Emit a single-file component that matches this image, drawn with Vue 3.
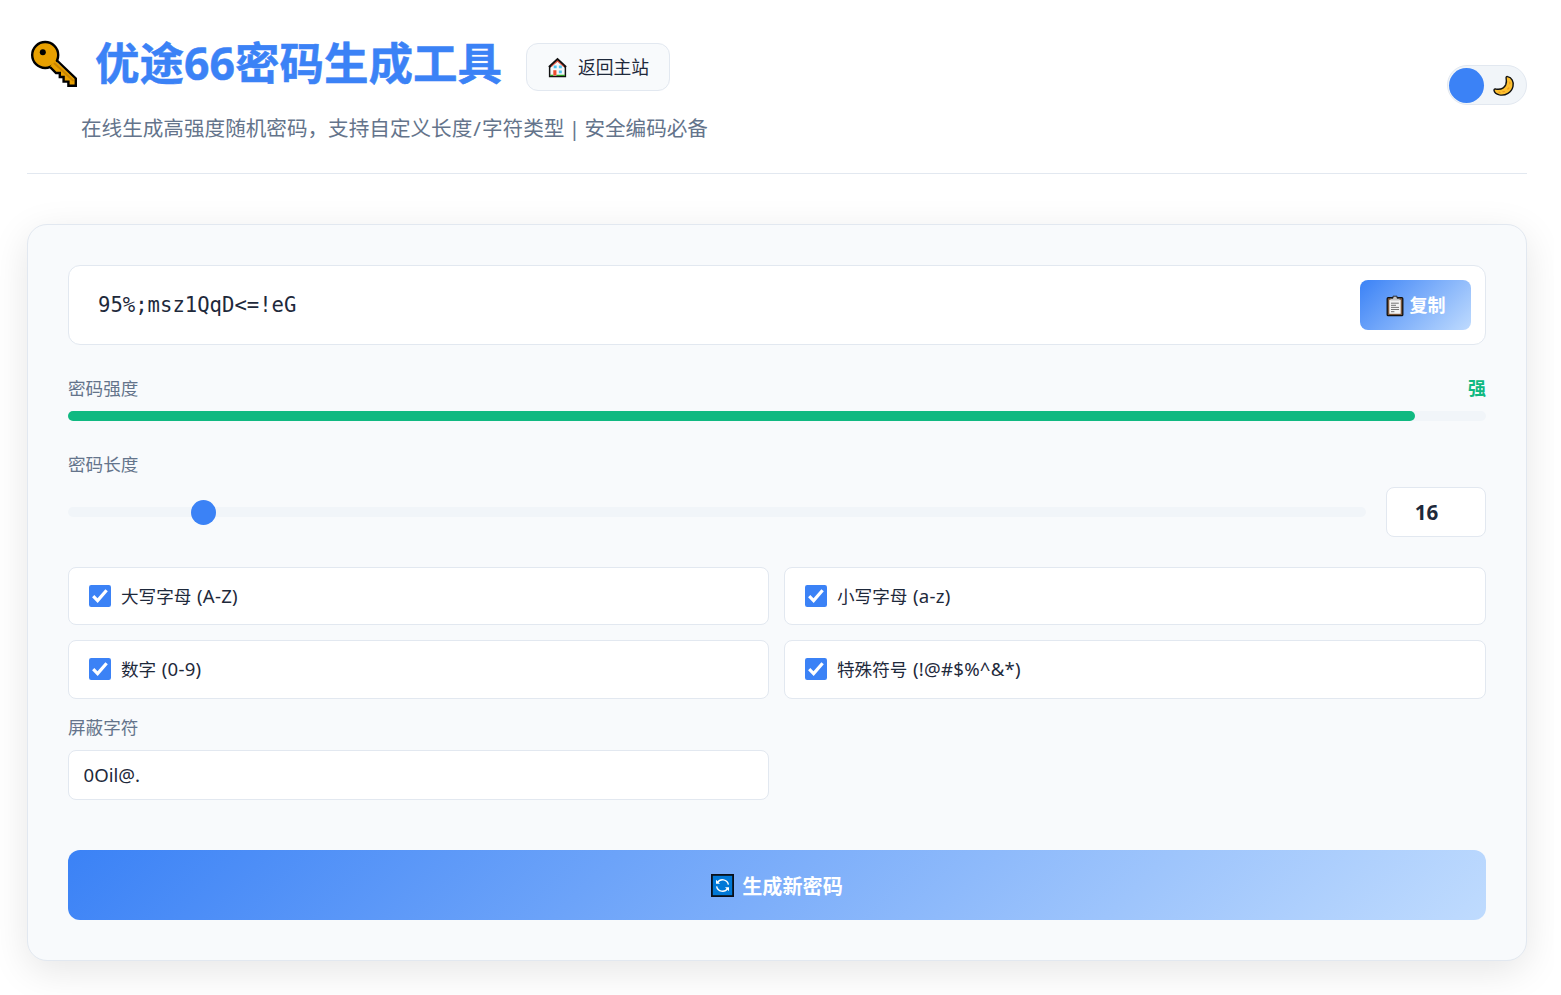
<script setup>
import { ref } from 'vue'

const password = ref('95%;msz1QqD<=!eG')
const length = ref('16')
const excluded = ref('0Oil@.')
const strength = 95
const thumb = 9.47
const options = ref([
  { label: '大写字母', chars: '(A-Z)', on: true },
  { label: '小写字母', chars: '(a-z)', on: true },
  { label: '数字', chars: '(0-9)', on: true },
  { label: '特殊符号', chars: '(!@#$%^&*)', on: true },
])
</script>

<template>
  <div class="page">
    <header class="header">
      <div class="brand">
        <div class="title-row">
          <svg class="key" viewBox="0 0 48 48">
            <circle cx="15.2" cy="15" r="13" fill="#e8a000" stroke="#000" stroke-width="2.4" />
            <path d="M25 20.5 L45.8 38.8 V45.8 H38.4 V41.6 H33.6 V37 H29.8 V33 H26 L20 26.5Z" fill="#e8a000" />
            <path d="M24 23 L43.6 41" stroke="#c98500" stroke-width="2" fill="none" />
            <path d="M27 20.5 L45.8 38.4 V45.8 H38.4 V41.6 H33.6 V37 H29.8 V33 H26 L20 27" stroke="#000" stroke-width="2.4" fill="none" />
            <circle cx="12.8" cy="12.2" r="3" fill="#000" />
          </svg>
          <h1>优途66密码生成工具</h1>
          <a class="home">
            <svg class="house" viewBox="0 0 20 20">
              <path d="M3 9 L10 2 L17 9 V18 H3Z" fill="#f4f7f8" />
              <path d="M2.5 8.5V18.6H17.5V8.5" fill="none" stroke="#111" stroke-width="1.4" />
              <path d="M2 9.6 L10 2.2 L18 9.6" fill="none" stroke="#111" stroke-width="2.2" />
              <path d="M4 9.2 L10 3.8 L16 9.2" fill="none" stroke="#e0523e" stroke-width="1" />
              <path d="M6.4 8.2h2.8v2.6H6.4zM11.3 8.2h2.8v2.6h-2.8zM11.3 12.8h2.8v2.6h-2.8z" fill="#4fc3ee" />
              <path d="M6 12.6h3v5H6z" fill="#ef4b2c" />
              <path d="M3 16.8h3v1.4H3zM9 16.8h8v1.4H9z" fill="#2f9e1f" />
            </svg>
            <span class="home-text">返回主站</span>
          </a>
        </div>
        <p class="subtitle">在线生成高强度随机密码，支持自定义长度<span class="slash">/</span>字符类型<span class="bar"> | </span>安全编码必备</p>
      </div>
      <div class="theme">
        <span class="knob"></span>
        <svg class="moon" viewBox="0 0 24 24">
          <path d="M15.6 2.6 C19.8 3.6 22 7.6 21 12.3 C19.7 18.3 13.4 22.1 7.4 20.9 C4.4 20.2 2.4 18.6 2 16.4 C2 15.2 2.8 14.8 3.8 15 C8.4 15.7 12.4 13.8 13.8 10.6 C14.8 8 14.5 5.8 14.1 3.8 C14 2.8 14.6 2.3 15.6 2.6Z" fill="#fdc02f" stroke="#111" stroke-width="1.4" />
          <path d="M17.8 8.2v1.6M16.8 14l-1 1M11 17.6h1.4M7 18.2l1 .4" stroke="#ef9a1c" stroke-width="1.4" stroke-linecap="round" />
        </svg>
      </div>
    </header>

    <main class="card">
      <div class="output">
        <span class="password">{{ password }}</span>
        <button class="copy">
          <svg class="clip" viewBox="0 0 18 22">
            <rect x="1.2" y="2.7" width="15.6" height="18" rx="1" fill="#7b5639" stroke="#111" stroke-width="1.3" />
            <rect x="3.3" y="4.8" width="11.4" height="14" fill="#f4f4f4" />
            <path d="M4.5 5.6V3.2H7V1.2H11V3.2H13.5V5.6Z" fill="#c4c4c4" />
            <path d="M4.5 3.2H7V1.2H11V3.2H13.5" fill="none" stroke="#222" stroke-width=".9" />
            <path d="M5 8.2h7.8M5 10.3h5M5 12.4h8M5 14.5h8M5 16.7h3.4" stroke="#666" stroke-width=".9" />
          </svg>
          <span class="copy-text">复制</span>
        </button>
      </div>

      <div class="strength">
        <span class="label">密码强度</span>
        <span class="level">强</span>
      </div>
      <div class="meter"><div class="fill" :style="{ width: strength + '%' }"></div></div>

      <div class="label length-label">密码长度</div>
      <div class="length">
        <div class="range"><span class="thumb" :style="{ left: thumb + '%' }"></span></div>
        <input v-model="length" class="number" />
      </div>

      <div class="options">
        <div v-for="o in options" :key="o.label" class="option" @click="o.on = !o.on">
          <svg class="check" viewBox="0 0 22 22">
            <rect width="22" height="22" rx="2.2" fill="#3b82f6" />
            <path v-if="o.on" d="M4.2 11.2 L8.6 15.6 L17.6 5.2" fill="none" stroke="#fff" stroke-width="3.2" />
          </svg>
          <span class="option-text">{{ o.label }} <span class="chars">{{ o.chars }}</span></span>
        </div>
      </div>

      <div class="label exclude-label">屏蔽字符</div>
      <input v-model="excluded" class="exclude" />

      <button class="generate">
        <svg class="cycle" viewBox="0 0 23 23">
          <rect x=".9" y=".9" width="21.2" height="21.2" fill="#0078d7" stroke="#0a0f18" stroke-width="1.8" />
          <path d="M6.4 8.6A6 6 0 0 1 17.4 10.6M16.6 14.4A6 6 0 0 1 5.6 12.4" fill="none" stroke="#fff" stroke-width="1.4" />
          <path d="M5 5.8v4h4zM18 17.2v-4h-4z" fill="#fff" />
        </svg>
        <span>生成新密码</span>
      </button>
    </main>
  </div>
</template>

<style>
body {
  margin: 0;
  background: #fff;
}
</style>

<style scoped>
.page {
  box-sizing: border-box;
  width: 1554px;
  height: 995px;
  padding: 25px 27px 0;
  overflow: hidden;
  color: #1e293b;
  font-family: "Noto Sans", "Noto Sans CJK SC", sans-serif;
  font-size: 17.6px;
}
button,
input {
  box-sizing: border-box;
  margin: 0;
  font: inherit;
  color: inherit;
  outline: none;
}
.header {
  display: flex;
  align-items: center;
  justify-content: space-between;
  box-sizing: border-box;
  height: 149px;
  padding-bottom: 28px;
  border-bottom: 1px solid #e2e8f0;
}
.brand {
  height: 120px;
}
.title-row {
  display: flex;
  align-items: center;
  height: 84px;
}
.key {
  width: 48px;
  height: 48px;
  margin-left: 3px;
  margin-top: -6px;
}
h1 {
  margin: -8px 0 0 17px;
  width: 408px;
  color: #3b82f6;
  font-size: 44.5px;
  line-height: 60px;
  font-weight: 700;
  white-space: nowrap;
  -webkit-text-stroke: 0.5px #3b82f6;
}
.home {
  display: flex;
  align-items: center;
  box-sizing: border-box;
  width: 144px;
  height: 48px;
  margin-left: 23px;
  padding-left: 20px;
  gap: 10px;
  border: 1px solid #e2e8f0;
  border-radius: 12px;
  background: #f8fafc;
  white-space: nowrap;
}
.home-text {
  padding-bottom: 2px;
  font-size: 17.8px;
}
.house {
  width: 21px;
  height: 21px;
}
.subtitle {
  margin: 5px 0 0 54px;
  color: #64748b;
  font-size: 20.6px;
  line-height: 28px;
  white-space: nowrap;
}
.slash {
  margin: 0 1px;
}
.bar {
  margin: 0 -1px;
}
.theme {
  display: flex;
  align-items: center;
  box-sizing: border-box;
  width: 80px;
  height: 40px;
  padding-left: 1px;
  gap: 8px;
  border: 1px solid #e2e8f0;
  border-radius: 20px;
  background: #f1f5f9;
}
.knob {
  width: 35px;
  height: 35px;
  border-radius: 50%;
  background: #3b82f6;
}
.moon {
  width: 24px;
  height: 24px;
  margin-top: 1px;
}
.card {
  box-sizing: border-box;
  height: 737px;
  margin-top: 50px;
  padding: 40px;
  border: 1px solid #e2e8f0;
  border-radius: 20px;
  background: #f8fafc;
  box-shadow: 0 10px 38px rgba(0, 0, 0, 0.1);
}
.output {
  display: flex;
  align-items: center;
  justify-content: space-between;
  box-sizing: border-box;
  height: 80px;
  padding: 0 14px 0 29px;
  border: 1px solid #e2e8f0;
  border-radius: 12px;
  background: #fff;
}
.password {
  font-family: "DejaVu Sans Mono", monospace;
  font-size: 20.6px;
}
.copy {
  display: flex;
  align-items: center;
  justify-content: center;
  width: 111px;
  height: 50px;
  padding: 0;
  gap: 6px;
  border: 0;
  border-radius: 8px;
  background: linear-gradient(135deg, #3b82f6, #bfdbfe);
  color: #fff;
  font-weight: 700;
}
.copy-text {
  padding-bottom: 2px;
  font-size: 18px;
}
.clip {
  width: 18px;
  height: 22px;
  margin-top: 1px;
}
.strength {
  display: flex;
  justify-content: space-between;
  height: 26px;
  margin-top: 30px;
  line-height: 26px;
}
.label {
  color: #64748b;
  line-height: 26px;
}
.level {
  color: #10b981;
  font-size: 18px;
  font-weight: 700;
}
.meter {
  height: 10px;
  margin-top: 10px;
  border-radius: 5px;
  background: #f1f5f9;
}
.fill {
  height: 10px;
  border-radius: 5px;
  background: #10b981;
}
.length-label {
  height: 26px;
  margin-top: 30px;
}
.length {
  display: flex;
  align-items: center;
  height: 50px;
  margin-top: 10px;
  gap: 20px;
}
.range {
  position: relative;
  flex: 1;
  height: 10px;
  border-radius: 5px;
  background: #f1f5f9;
}
.thumb {
  position: absolute;
  top: -7px;
  width: 25px;
  height: 25px;
  border-radius: 50%;
  background: #3b82f6;
}
.number {
  width: 100px;
  height: 50px;
  padding: 0 19px 1px 0;
  border: 1px solid #e2e8f0;
  border-radius: 8px;
  background: #fff;
  font-size: 20.6px;
  font-weight: 700;
  text-align: center;
}
.options {
  display: grid;
  grid-template-columns: 701px 702px;
  grid-template-rows: 58px 59px;
  gap: 15px;
  margin-top: 30px;
}
.option {
  display: flex;
  align-items: center;
  padding-left: 20px;
  gap: 10.5px;
  border: 1px solid #e2e8f0;
  border-radius: 8px;
  background: #fff;
}
.option-text {
  padding-bottom: 2px;
}
.chars {
  margin-left: 1px;
  font-size: 18.6px;
  letter-spacing: 0.25px;
}
.check {
  width: 22px;
  height: 22px;
  margin-left: -0.5px;
  margin-top: -1px;
}
.exclude-label {
  height: 26px;
  margin-top: 15px;
}
.exclude {
  display: block;
  width: 701px;
  height: 50px;
  margin-top: 10px;
  padding: 0 14.5px 2px;
  border: 1px solid #e2e8f0;
  border-radius: 8px;
  background: #fff;
  font-size: 18.6px;
}
.generate {
  display: flex;
  align-items: center;
  justify-content: center;
  width: 100%;
  height: 70px;
  margin-top: 50px;
  padding: 0;
  gap: 8px;
  border: 0;
  border-radius: 12px;
  background: linear-gradient(135deg, #3b82f6, #bfdbfe);
  color: #fff;
  font-size: 20.1px;
  font-weight: 700;
}
.cycle {
  width: 23px;
  height: 23px;
}
</style>
